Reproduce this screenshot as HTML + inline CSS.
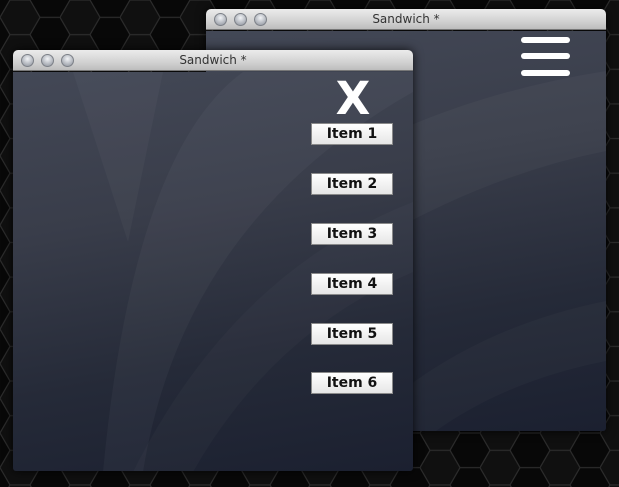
<!DOCTYPE html>
<html><head><meta charset="utf-8"><style>
*{margin:0;padding:0;box-sizing:border-box}
body{width:619px;height:487px;overflow:hidden;background:#080808;position:relative;font-family:"Liberation Sans",sans-serif}
.bg{position:absolute;left:0;top:0}
.win{position:absolute;border-radius:5px 5px 3px 3px;overflow:hidden;box-shadow:0 0 10px rgba(0,0,0,.8)}
.tb{height:21px;background:linear-gradient(#ebebeb,#d2d2d2 60%,#bdbdbd);border-bottom:1px solid #777;position:relative;text-align:center;font-family:"DejaVu Sans",sans-serif;font-size:12px;line-height:21px;color:#333}
.dot{position:absolute;top:4px;width:13px;height:13px;border-radius:50%;background:radial-gradient(circle at 50% 35%,#f2f4f7,#b8bcc3 55%,#8a8f98);border:1px solid #7d8188}
.content{position:absolute;top:22px;left:0;right:0;bottom:0;background:linear-gradient(170deg,#434856 0%,#393d4a 35%,#252a38 70%,#1b2030 100%)}
.btn{position:absolute;left:298px;width:82px;height:22px;background:linear-gradient(#fff,#e6e6e6);border:1px solid #8a8a8a;font-family:"DejaVu Sans",sans-serif;font-weight:bold;font-size:14px;line-height:20px;text-align:center;color:#111}
.bar{position:absolute;left:315px;width:49px;height:6px;border-radius:3px;background:#fff}
</style></head><body>
<svg class="bg" width="619" height="487"><defs><pattern id="h" width="60" height="34.64" patternUnits="userSpaceOnUse"><path d="M0 17.32L10 0H30L40 17.32L30 34.64H10Z M40 17.32H60" fill="#101010" stroke="#2c2c2c" stroke-width="1.2"/></pattern></defs><rect width="619" height="487" fill="url(#h)"/></svg>
<div class="win" style="left:206px;top:9px;width:400px;height:422px">
<div class="tb">Sandwich *<span class="dot" style="left:8px"></span><span class="dot" style="left:28px"></span><span class="dot" style="left:48px"></span></div>
<div class="content">
<svg width="400" height="400" style="position:absolute;left:0;top:0"><path d="M0 230 Q150 80 400 40 L400 120 Q200 160 0 330Z" fill="rgba(255,255,255,.03)"/><path d="M150 400 Q250 300 400 270 L400 330 Q300 350 230 400Z" fill="rgba(255,255,255,.025)"/></svg>
<div class="bar" style="top:6px"></div><div class="bar" style="top:22px"></div><div class="bar" style="top:39px"></div>
</div></div>
<div class="win" style="left:13px;top:50px;width:400px;height:421px">
<div class="tb">Sandwich *<span class="dot" style="left:8px"></span><span class="dot" style="left:28px"></span><span class="dot" style="left:48px"></span></div>
<div class="content">
<svg width="400" height="400" style="position:absolute;left:0;top:0"><path d="M130 400 Q170 150 400 20 L400 0 L230 0 Q120 80 90 400Z" fill="rgba(255,255,255,.035)"/><path d="M60 0 L150 0 L115 170 Z" fill="rgba(255,255,255,.03)"/><path d="M120 400 Q220 200 400 130 L400 200 Q260 260 180 400Z" fill="rgba(255,255,255,.025)"/></svg>
<div style="position:absolute;left:321px;top:4px;width:38px;font-family:'DejaVu Sans',sans-serif;font-weight:bold;font-size:45px;color:#fff;line-height:46px;text-align:center">X</div>
<div class="btn" style="top:51px">Item 1</div>
<div class="btn" style="top:101px">Item 2</div>
<div class="btn" style="top:151px">Item 3</div>
<div class="btn" style="top:201px">Item 4</div>
<div class="btn" style="top:251px">Item 5</div>
<div class="btn" style="top:300px">Item 6</div>
</div></div>
</body></html>
